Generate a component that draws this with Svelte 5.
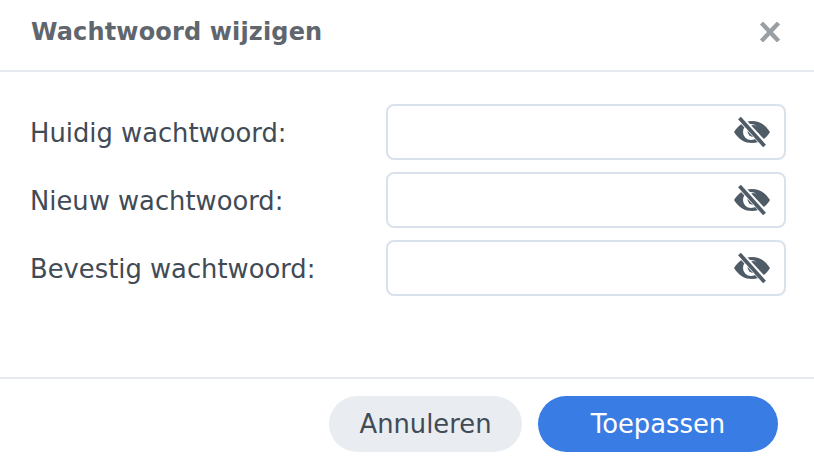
<script>
	const fields = ['Huidig wachtwoord:', 'Nieuw wachtwoord:', 'Bevestig wachtwoord:'];
</script>

<section class="dialog">
	<header class="head">
		<h1>Wachtwoord wijzigen</h1>
		<button class="close" aria-label="Sluiten">
			<svg viewBox="0 0 22 20" width="22" height="20">
				<path d="M2.5 1 L19.5 19 M19.5 1 L2.5 19" stroke="#9a9fa4" stroke-width="4.4" fill="none" />
			</svg>
		</button>
	</header>

	<form class="form">
		{#each fields as label}
			<label class="row">
				<span>{label}</span>
				<div class="field">
					<input type="password" />
					<svg class="eye" viewBox="0 0 36 32" width="36" height="32">
						<path
							fill="#4f5b66"
							fill-rule="evenodd"
							d="M0 16 C5 8 11 5 18 5 C25 5 31 8 36 16 C31 24 25 27 18 27 C11 27 5 24 0 16 Z M17 8 A8 8 0 1 0 17 24 A8 8 0 1 0 17 8 Z"
						/>
						<circle cx="19.500" cy="15" r="6" fill="#4f5b66" />
						<path d="M6 2 L31 29" stroke="#fff" stroke-width="6.500" />
						<path d="M5.500 2 L30.500 30" stroke="#4f5b66" stroke-width="3.800" />
					</svg>
				</div>
			</label>
		{/each}
	</form>

	<footer class="foot">
		<button class="btn btn--cancel">Annuleren</button>
		<button class="btn btn--apply">Toepassen</button>
	</footer>
</section>

<style>
	:global(body) {
		margin: 0;
		background: #fff;
	}

	.dialog {
		width: 814px;
		height: 464px;
		display: flex;
		flex-direction: column;
		font-family: 'DejaVu Sans', Verdana, sans-serif;
		color: #414b55;
	}

	.head {
		height: 64px;
		display: flex;
		align-items: center;
		justify-content: space-between;
		padding: 0 33px 6px 31px;
		border-bottom: 2px solid #e6eaef;
	}

	h1 {
		margin: 0;
		font-size: 24px;
		font-weight: 700;
		letter-spacing: 0.15px;
		color: #5f666d;
	}

	.close {
		border: 0;
		padding: 0;
		background: none;
		display: flex;
	}

	.form {
		flex: 1;
		padding: 32px 28px 0 30px;
		display: flex;
		flex-direction: column;
		gap: 12px;
	}

	.row {
		display: flex;
		align-items: center;
		justify-content: space-between;
		font-size: 25.800px;
	}

	.row span {
		padding-top: 2px;
	}

	.field {
		width: 400px;
		height: 56px;
		box-sizing: border-box;
		border: 2px solid #d9e2ec;
		border-radius: 8px;
		display: flex;
		align-items: center;
		padding-right: 14px;
	}

	input {
		flex: 1;
		min-width: 0;
		border: 0;
		outline: 0;
		background: none;
	}

	.foot {
		height: 87px;
		box-sizing: border-box;
		border-top: 2px solid #e6eaef;
		padding: 17px 36px 0 0;
		display: flex;
		justify-content: flex-end;
		gap: 16px;
	}

	.btn {
		height: 56px;
		border: 0;
		border-radius: 28px;
		font-family: inherit;
		font-size: 25.800px;
		padding: 0;
	}

	.btn--cancel {
		width: 193px;
		background: #e9edf1;
		color: #414b55;
	}

	.btn--apply {
		width: 240px;
		background: #397de4;
		color: #fff;
	}
</style>
